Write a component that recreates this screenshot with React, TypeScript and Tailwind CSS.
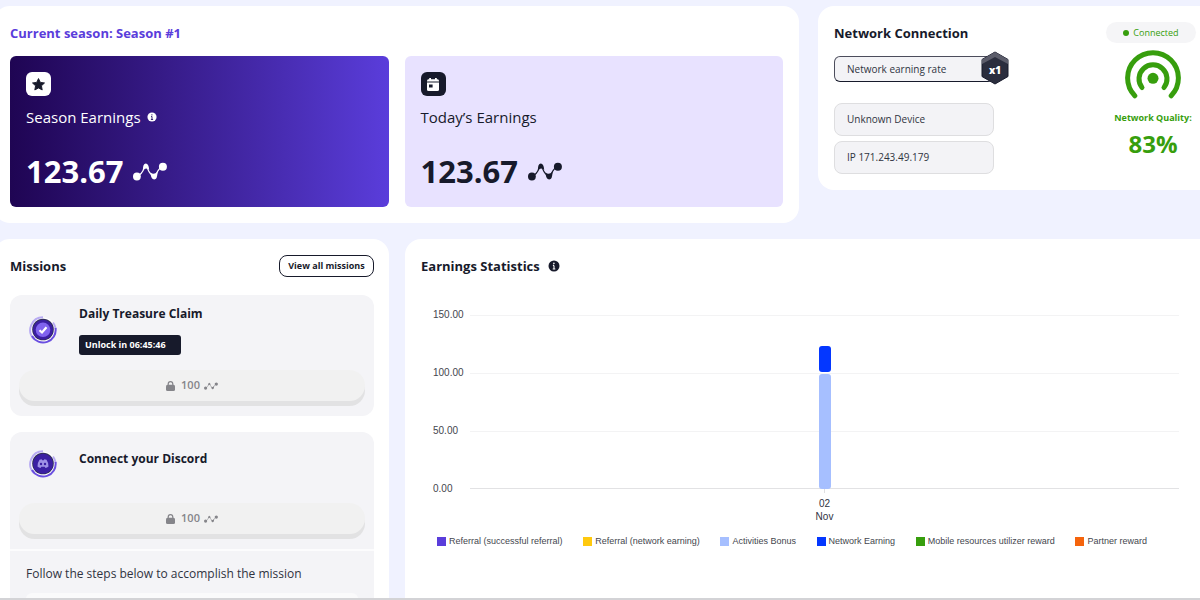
import React from "react";

const series = [
  { name: "Referral (successful referral)", color: "bg-[#5a3ddb]" },
  { name: "Referral (network earning)", color: "bg-[#ffc90e]" },
  { name: "Activities Bonus", color: "bg-[#a6bfff]" },
  { name: "Network Earning", color: "bg-[#0437ff]" },
  { name: "Mobile resources utilizer reward", color: "bg-[#379e0d]" },
  { name: "Partner reward", color: "bg-[#f5640c]" },
];

const days = [{ day: "02", month: "Nov", activities: 100, network: 23.67 }];
const ticks = ["150.00", "100.00", "50.00", "0.00"];
const chartMax = 150;

function PointsIcon({ className }: { className?: string }) {
  return (
    <svg viewBox="0 0 34 19" className={className} fill="currentColor" aria-hidden="true">
      <path
        d="M4 14.5 Q9 12 11 6.5 Q12.500 3 14.500 6.500 Q17 12.500 20.500 14 Q23 14 24.500 9.500 Q26 6 30 5"
        fill="none"
        stroke="currentColor"
        strokeWidth="1.2"
      />
      <path d="M9.800 8.500 Q9.800 1.500 12.800 1.500 Q15.800 1.500 16.200 8 Q13 4.800 9.800 8.500Z" />
      <path d="M17.500 10.500 Q21 13.500 24.500 9.500 Q24.500 17.500 21.200 17.500 Q18 17.500 17.500 10.500Z" />
      <circle cx="3.900" cy="14.500" r="3.900" />
      <circle cx="29.900" cy="4.800" r="4" />
    </svg>
  );
}

function InfoIcon({ className }: { className?: string }) {
  return (
    <svg viewBox="0 0 12 12" className={className} aria-hidden="true">
      <circle cx="6" cy="6" r="5.500" fill="currentColor" />
      <path d="M6 5.400V9M4.900 5.400H6M4.700 9H7.300" stroke="var(--info-mark)" strokeWidth="1.100" fill="none" />
      <circle cx="5.900" cy="3.400" r="0.800" fill="var(--info-mark)" />
    </svg>
  );
}

function StarIcon() {
  return (
    <svg viewBox="0 0 24 24" className="size-[15px]" aria-hidden="true">
      <path
        d="M12 2.500l2.900 6.100 6.700.9-4.900 4.600 1.200 6.600L12 17.500l-5.900 3.200 1.200-6.600-4.900-4.600 6.700-.9z"
        fill="#171a2b"
        stroke="#171a2b"
        strokeWidth="1.500"
        strokeLinejoin="round"
      />
    </svg>
  );
}

function CalendarIcon() {
  return (
    <svg viewBox="0 0 12 13" className="h-[13px] w-3" aria-hidden="true">
      <path d="M0 3Q0 1.200 1.500 1.200H2.200V0H4V1.200H8V0H9.800V1.200H10.500Q12 1.200 12 3V3.600H0Z" fill="#fff" />
      <path d="M0 4.600H12V11.500Q12 13 10.500 13H1.500Q0 13 0 11.500Z" fill="#fff" />
      <rect x="2" y="6.500" width="3.600" height="3" fill="#171a2b" />
    </svg>
  );
}

function LockIcon() {
  return (
    <svg viewBox="0 0 9 10" className="h-2.5 w-[9px]" aria-hidden="true">
      <path d="M2.200 5V2.900a2.300 2.300 0 0 1 4.600 0V5" fill="none" stroke="currentColor" strokeWidth="1.200" />
      <rect y="3.800" width="9" height="6.200" rx="1.500" fill="currentColor" />
    </svg>
  );
}

function SignalIcon() {
  return (
    <svg viewBox="0 0 56 50" className="h-[50px] w-14" fill="none" stroke="#379e0d" strokeWidth="5" strokeLinecap="round" aria-hidden="true">
      <path d="M9.800 46.800A25.400 25.400 0 1 1 46.200 46.800" />
      <path d="M17 38.500A14 14 0 1 1 39 38.500" />
      <circle cx="28" cy="29.300" r="5.500" fill="#379e0d" stroke="none" />
    </svg>
  );
}

function MissionBadge({ kind }: { kind: "check" | "discord" }) {
  return (
    <svg viewBox="0 0 28 28" className="size-7 shrink-0" aria-hidden="true">
      <circle cx="14" cy="14" r="12.400" fill="#fff" />
      <path d="M5 23A12.700 12.700 0 0 1 14 1.300" fill="none" stroke="#b9acf3" strokeWidth="2" />
      <path d="M24 6.500A12.600 12.600 0 0 1 26.600 13" fill="none" stroke="#b9acf3" strokeWidth="2" />
      <path d="M26.500 12A12.600 12.600 0 0 1 3 20" fill="none" stroke="#6a4fe0" strokeWidth="2" />
      <circle cx="14" cy="13.500" r="10.800" fill="#32305a" />
      <circle cx="14" cy="13.800" r="10" fill="#3b1fa3" />
      {kind === "check" ? (
        <>
          <circle cx="14" cy="13.800" r="7.300" fill="#8063ef" />
          <path d="M10.500 14.200l2.500 2.300 4.500-5.300" fill="none" stroke="#fff" strokeWidth="2.200" />
        </>
      ) : (
        <>
          <path
            d="M10.500 9.800L12.700 9.300L13.200 10.200H14.800L15.300 9.300L17.500 9.800Q19.600 12.800 19.500 16.600Q18 17.900 16.500 18L15.700 16.700H12.300L11.500 18Q10 17.900 8.500 16.600Q8.400 12.800 10.500 9.800Z"
            fill="#9f91e6"
          />
          <circle cx="12" cy="14" r="1.200" fill="#3b1fa3" />
          <circle cx="16" cy="14" r="1.200" fill="#3b1fa3" />
        </>
      )}
    </svg>
  );
}

function EarningsCard({
  icon,
  label,
  value,
  info,
  className,
}: {
  icon: React.ReactNode;
  label: string;
  value: string;
  info?: boolean;
  className: string;
}) {
  return (
    <div className={`flex h-[151px] flex-1 flex-col items-start rounded-md p-4 ${className}`}>
      {icon}
      <div className="mt-[11px] flex items-center gap-1.5 text-[15px] leading-5">
        {label}
        {info && <InfoIcon className="size-2.5 [--info-mark:#2a1468]" />}
      </div>
      <div className="mt-6 flex items-center gap-2.5 text-[31px] leading-10 font-bold">
        {value}
        <PointsIcon className="h-[19px] w-[34px]" />
      </div>
    </div>
  );
}

function ClaimButton() {
  return (
    <button
      type="button"
      disabled
      className="flex h-[31px] w-full items-center justify-center gap-1.5 rounded-2xl bg-[#f1f1f1] text-[11px] font-semibold text-[#85858a] shadow-[0_5px_0_#e2e2e3]"
    >
      <LockIcon />
      100
      <PointsIcon className="-ml-0.5 h-2 w-3.5" />
    </button>
  );
}

function NetworkPanel() {
  return (
    <section className="flex w-[382px] shrink-0 justify-between self-start rounded-l-2xl bg-white py-4 pl-4">
      <div className="flex w-40 flex-col">
        <h2 className="text-[13px] leading-[22px] font-bold whitespace-nowrap">Network Connection</h2>
        <div className="relative mt-3 flex h-[26px] w-40 items-center rounded-md border border-[#4c4d5c] border-b-[#171a2b] bg-[#f3f3f6] px-3 text-[10px] text-[#30333f]">
          Network earning rate
          <span className="absolute -top-1.5 -right-4 flex h-[34px] w-7 items-center justify-center pt-1 text-[10px] font-extrabold text-white">
            <svg viewBox="0 0 28 34" className="absolute inset-0" aria-hidden="true">
              <path d="M14 1L27 8.500V25.500L14 33L1 25.500V8.500Z" fill="#2b2e3e" stroke="#171a2b" />
              <path d="M14 1L27 8.500V13L14 6L1 13V8.500Z" fill="#5c5d6b" />
            </svg>
            <span className="relative">x1</span>
          </span>
        </div>
        <div className="mt-[21px] flex h-[33px] items-center rounded-lg border border-[#dedee0] bg-[#f3f3f6] px-3 text-[10px] text-[#30333f]">
          Unknown Device
        </div>
        <div className="mt-[5px] flex h-[33px] items-center rounded-lg border border-[#dedee0] bg-[#f3f3f6] px-3 text-[10px] text-[#30333f]">
          IP 171.243.49.179
        </div>
      </div>
      <div className="flex w-[94px] flex-col items-center text-[#379e0d]">
        <div className="flex h-[21px] w-[90px] items-center justify-center gap-1 self-start rounded-full bg-[#f5f5f7] text-[9px]">
          <span className="size-1.5 rounded-full bg-[#379e0d]" />
          Connected
        </div>
        <div className="mt-1.5">
          <SignalIcon />
        </div>
        <p className="mt-[11px] text-[9px] leading-4 font-bold whitespace-nowrap">Network Quality:</p>
        <p className="mt-0.5 text-2xl leading-8 font-bold">83%</p>
      </div>
    </section>
  );
}

function Missions() {
  return (
    <section className="w-[395px] shrink-0 rounded-t-2xl bg-white pt-4 pr-[15px] pl-4">
      <div className="flex items-center justify-between">
        <h2 className="text-[13px] leading-[22px] font-bold">Missions</h2>
        <button type="button" className="h-[22px] w-[95px] rounded-lg border border-[#171a2b] text-[9px] font-bold whitespace-nowrap">
          View all missions
        </button>
      </div>

      <article className="mt-[18px] h-[121px] rounded-xl bg-[#f4f4f7] px-[9px] pt-2.5">
        <div className="flex h-[65px] gap-[22px] pl-2.5">
          <div className="pt-[11px]">
            <MissionBadge kind="check" />
          </div>
          <div>
            <h3 className="text-xs leading-[18px] font-bold">Daily Treasure Claim</h3>
            <p className="mt-3 h-5 w-[102px] rounded-[3px] bg-[#171a2b] px-1.5 text-[9px] leading-5 font-bold text-white">
              Unlock in 06:45:46
            </p>
          </div>
        </div>
        <ClaimButton />
      </article>

      <article className="mt-4 h-52 rounded-xl bg-[#f4f4f7]">
        <div className="h-[117px] px-[9px] pt-[18px]">
          <div className="flex h-[53px] gap-[22px] pl-2.5">
            <MissionBadge kind="discord" />
            <h3 className="text-xs leading-[18px] font-bold">Connect your Discord</h3>
          </div>
          <ClaimButton />
        </div>
        <div className="border-t-2 border-white/70 px-4 pt-3.5">
          <p className="text-xs leading-[18px] text-[#30333f]">Follow the steps below to accomplish the mission</p>
          <div className="mt-2.5 h-12 rounded-md bg-[#fafafb]" />
        </div>
      </article>
    </section>
  );
}

function Statistics() {
  return (
    <section className="min-w-0 flex-1 rounded-tl-2xl bg-white pt-4 pr-[21px] pl-4">
      <h2 className="flex items-center gap-2 text-[13px] leading-[22px] font-bold">
        Earnings Statistics
        <InfoIcon className="size-3 [--info-mark:#fff]" />
      </h2>

      <div className="mt-[38px] flex pl-3 font-['Liberation_Sans',sans-serif] text-[10px] text-[#44464e]">
        <div className="-mt-1.5 flex h-[186px] w-[37px] flex-col justify-between">
          {ticks.map((t) => (
            <span key={t} className="leading-3">
              {t}
            </span>
          ))}
        </div>
        <div className="min-w-0 flex-1">
          <div className="relative">
            <div className="h-[58px] border-t border-[#f3f3f4]" />
            <div className="h-[58px] border-t border-[#f3f3f4]" />
            <div className="h-[58px] border-y border-t-[#f3f3f4] border-b-[#e2e2e4]" />
            {/* stacked bars over the grid */}
            <div className="absolute inset-0 flex items-end justify-around">
              {days.map((d) => (
                <div key={d.day} className="flex h-full w-3 flex-col justify-end gap-0.5">
                  <div className="rounded-[3px] bg-[#0437ff]" style={{ height: `${((d.network - 1) / chartMax) * 100}%` }} />
                  <div className="rounded-[3px] bg-[#a6bfff]" style={{ height: `${((d.activities - 1) / chartMax) * 100}%` }} />
                </div>
              ))}
            </div>
          </div>
          <div className="flex justify-around">
            {days.map((d) => (
              <div key={d.day} className="flex flex-col items-center text-[#30333f]">
                <span className="h-1 w-px bg-[#dfdfe1]" />
                <span className="mt-1 leading-[13px]">{d.day}</span>
                <span className="leading-[13px]">{d.month}</span>
              </div>
            ))}
          </div>
        </div>
      </div>

      <ul className="mt-3 flex flex-wrap justify-between pr-8 pl-4 font-['Liberation_Sans',sans-serif] text-[9px] leading-3 text-[#44464e]">
        {series.map((s) => (
          <li key={s.name} className="flex items-center gap-[3px] whitespace-nowrap">
            <span className={`size-[9px] ${s.color}`} />
            {s.name}
          </li>
        ))}
      </ul>
    </section>
  );
}

export default function App() {
  return (
    <div className="h-screen overflow-hidden border-b-2 border-[#d3d3d6] bg-[#f0f2ff] font-['Open_Sans','Noto_Sans',sans-serif] text-[#171a2b]">
      <div className="-ml-1.5 flex flex-col gap-4 pt-1.5">
        <div className="flex gap-[19px]">
          <section className="min-w-0 flex-1 rounded-2xl bg-white p-4">
            <h2 className="text-[13px] leading-[22px] font-bold text-[#5a3ddb]">Current season: Season #1</h2>
            <div className="mt-3 flex gap-4">
              <EarningsCard
                label="Season Earnings"
                value="123.67"
                info
                className="bg-linear-to-r from-[#1f0553] to-[#5a3ddb] text-white"
                icon={
                  <span className="flex size-[25px] items-center justify-center rounded-md bg-white">
                    <StarIcon />
                  </span>
                }
              />
              <EarningsCard
                label="Today’s Earnings"
                value="123.67"
                className="bg-[#e8e2ff]"
                icon={
                  <span className="flex size-[25px] items-center justify-center rounded-md bg-[#171a2b]">
                    <CalendarIcon />
                  </span>
                }
              />
            </div>
          </section>
          <NetworkPanel />
        </div>

        <div className="flex gap-4">
          <Missions />
          <Statistics />
        </div>
      </div>
    </div>
  );
}
